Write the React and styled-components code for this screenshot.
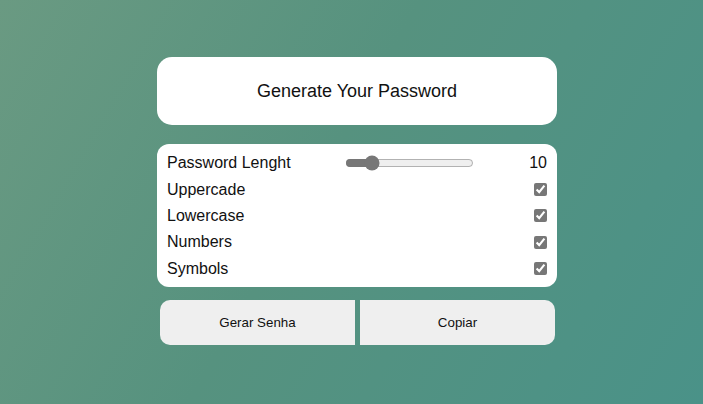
import React, { useState } from 'react'
import styled, { createGlobalStyle } from 'styled-components'

const GlobalStyle = createGlobalStyle`
  html, body {
    margin: 0;
    padding: 0;
  }
  body {
    font-family: "Liberation Sans", Arial, sans-serif;
  }
`

const Page = styled.div`
  min-height: 100vh;
  box-sizing: border-box;
  padding: 0 0 2px 11px;
  display: flex;
  align-items: center;
  justify-content: center;
  background: linear-gradient(120deg, #6a9a82 0%, #56927f 45%, #4a9288 100%);
`

const Container = styled.div`
  width: 400px;
  display: flex;
  flex-direction: column;
`

const TitleCard = styled.div`
  height: 68px;
  background: #fff;
  border-radius: 15px;
  display: flex;
  align-items: center;
  justify-content: center;
  font-size: 18px;
  color: #111;
  margin-bottom: 19px;
`

const Settings = styled.div`
  height: 143px;
  box-sizing: border-box;
  background: #fff;
  border-radius: 12px;
  padding: 6px 10px 5px;
  display: flex;
  flex-direction: column;
  margin-bottom: 13px;
`

const Row = styled.label`
  height: 26.4px;
  flex-shrink: 0;
  display: flex;
  align-items: center;
  justify-content: space-between;
  font-size: 16px;
  color: #111;
`

const Range = styled.input`
  accent-color: #777;
  margin: 0 2px;
  width: 129px;
`

const Check = styled.input`
  accent-color: #777;
  margin: 0;
  width: 13px;
  height: 13px;
`

const Buttons = styled.div`
  display: flex;
  gap: 5px;
  padding: 0 2px 0 3px;
`

const Button = styled.button`
  flex: 1;
  height: 45px;
  border: none;
  background: #efefef;
  font-family: "Liberation Sans", Arial, sans-serif;
  font-size: 13.33px;
  color: #111;
  border-radius: ${p => (p.$side === 'left' ? '10px 0 0 10px' : '0 10px 10px 0')};
  cursor: pointer;
`

const options = ['Uppercade', 'Lowercase', 'Numbers', 'Symbols']

export default function App() {
  const [length, setLength] = useState(10)
  const [checked, setChecked] = useState({ Uppercade: true, Lowercase: true, Numbers: true, Symbols: true })

  return (
    <>
      <GlobalStyle />
      <Page>
        <Container>
          <TitleCard>Generate Your Password</TitleCard>
          <Settings>
            <Row as="div">
              <span>Password Lenght</span>
              <Range
                type="range"
                min="4"
                max="40"
                value={length}
                onChange={e => setLength(Number(e.target.value))}
              />
              <span>{length}</span>
            </Row>
            {options.map(o => (
              <Row key={o}>
                <span>{o}</span>
                <Check
                  type="checkbox"
                  checked={checked[o]}
                  onChange={() => setChecked({ ...checked, [o]: !checked[o] })}
                />
              </Row>
            ))}
          </Settings>
          <Buttons>
            <Button $side="left">Gerar Senha</Button>
            <Button $side="right">Copiar</Button>
          </Buttons>
        </Container>
      </Page>
    </>
  )
}
